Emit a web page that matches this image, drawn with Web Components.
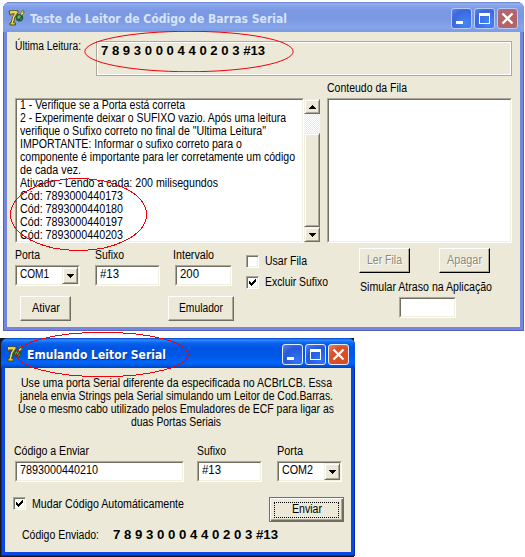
<!DOCTYPE html>
<html lang="pt-BR">
<head>
<meta charset="utf-8">
<title>Teste de Leitor de Código de Barras Serial</title>
<style>
html,body{margin:0;background:#fff;height:557px;overflow:hidden}
</style>
</head>
<body>
<demo-desktop></demo-desktop>
<script>
const define = (name, html, ready) => customElements.define(name, class extends HTMLElement {
  connectedCallback() {
    if (this.shadowRoot) return;
    const t = document.createElement('template');
    t.innerHTML = html;
    this.attachShadow({mode: 'open'}).append(document.importNode(t.content, true));
    if (ready) ready(this, this.shadowRoot);
  }
});

/* One line of text condensed or widened to the width in its w attribute. */
define('fit-text', `<style>
:host{display:block;height:13px;line-height:13px;font-size:12px;white-space:nowrap;flex:none}
span{display:inline-block;transform-origin:0 0}
</style><span><slot></slot></span>`, (el, root) => {
  const w = parseFloat(el.getAttribute('w'));
  const s = root.querySelector('span');
  el.style.width = w + 'px';
  s.style.transform = 'scaleX(' + w / s.getBoundingClientRect().width + ')';
});

define('win-edit', `<style>
:host{display:block;box-sizing:border-box;height:21px;background:#fff;border:1px solid;border-color:#aca899 #fff #fff #aca899;flex:none}
div{box-sizing:border-box;height:100%;border:1px solid;border-color:#716f64 #f1efe2 #f1efe2 #716f64;padding:1px 0 0 3px}
</style><div><slot></slot></div>`);

define('win-arrow', `<style>
:host{display:flex;box-sizing:border-box;width:16px;height:16px;align-items:center;justify-content:center;background:#ece9d8;border:1px solid;border-color:#f1efe2 #716f64 #716f64 #f1efe2;box-shadow:inset 1px 1px #fff,inset -1px -1px #aca899;flex:none}
:host([up]) svg{transform:scaleY(-1)}
</style><svg width="7" height="4" shape-rendering="crispEdges"><path d="M0 0h7v1h-1v1h-1v1h-1v1h-1v-1h-1v-1h-1v-1h-1z"/></svg>`);

define('win-combo', `<style>
:host{display:block;width:65px;flex:none}
div{display:flex;justify-content:space-between;margin:-1px 0 0}
::slotted(*){margin-top:1px}
win-arrow{height:17px}
</style><win-edit><div><slot></slot><win-arrow></win-arrow></div></win-edit>`);

define('win-button', `<style>
:host{display:flex;box-sizing:border-box;height:25px;align-items:center;justify-content:center;padding-bottom:1px;background:#ece9d8;border:1px solid;border-color:#fff #716f64 #716f64 #fff;box-shadow:inset -1px -1px #aca899;flex:none}
:host([disabled]){color:#8b897b;text-shadow:1px 1px #fff;border-right-color:#000;border-bottom-color:#000}
:host([default]){border-color:#716f64;box-shadow:inset 1px 1px #fff,inset -1px -1px #716f64,inset -2px -2px #aca899;padding:0}
:host([default]) div{border:1px dotted #000;width:63px;height:14px;display:flex;justify-content:center}
</style><div><slot></slot></div>`);

define('win-check', `<style>
:host{display:flex;gap:6px;height:13px;flex:none}
div{box-sizing:border-box;width:13px;height:13px;background:#fff;border:1px solid;border-color:#aca899 #fff #fff #aca899;box-shadow:inset 1px 1px #716f64,inset -1px -1px #f1efe2}
svg{display:none}
:host([checked]) svg{display:block}
</style><div><svg width="11" height="11" shape-rendering="crispEdges"><path d="M2 4h1v1h1v1h1v-1h1v-1h1v-1h1v-1h1v3h-1v1h-1v1h-1v1h-1v1h-1v-1h-1v-1h-1z"/></svg></div><slot></slot>`);

define('win-scroll', `<style>
:host{display:flex;flex-direction:column;box-sizing:border-box;width:16px;height:145px;padding:1px 0;flex:none}
i{height:19px;background:repeating-conic-gradient(#ece9d8 0 25%,#fff 0 50%) 0 0/2px 2px}
b{flex:1;background:#ece9d8;border:1px solid;border-color:#f1efe2 #716f64 #716f64 #f1efe2;box-shadow:inset 1px 1px #fff,inset -1px -1px #aca899}
win-arrow{height:15px}
</style><win-arrow up></win-arrow><i></i><b></b><win-arrow></win-arrow>`);

define('delphi-icon', `<style>:host{display:block;width:17px;height:17px;flex:none}svg{display:block}</style>
<svg width="17" height="17" viewBox="0 0 17 17">
<circle cx="11.5" cy="8.7" r="3.7" fill="#28543c"/>
<path d="M9 8l2-2 2 1-1 2-2 1zM12 10l2-1-1 2z" fill="#61b968"/>
<path d="M12.500 5l1.500-3.500 1.500-.5-.7 2.500 1.700-.8-1 2-2.500 1.800z" fill="#f7ee22" stroke="#3b4a18" stroke-width=".5"/>
<path d="M1 2l9-.3v2L7 8l-1.500 5.500L7.500 14v2H2v-2l1.500-.8L4.800 8 7 5H3.500L2 6.200z" fill="#e5c81b" stroke="#4d4311" stroke-width=".9"/>
<path d="M2 2.800h6.800M7.500 4.500L5.600 8l-1.300 5.500" fill="none" stroke="#fff485" stroke-width=".9"/>
</svg>`);

define('caption-button', `<style>
:host{display:block;box-sizing:border-box;width:21px;height:21px;border:1px solid #e4ecfc;border-radius:3px;background:radial-gradient(circle at 75% 80%,#3275f4,#2459dc 60%,#5b83e8);flex:none}
:host([inactive]){border-color:#b8caf4;background:radial-gradient(circle at 70% 75%,#4786f2,#3a68de 65%,#6187e6)}
:host([kind=close]){background:radial-gradient(circle at 70% 75%,#da4b1e,#d8502b 60%,#e98670)}
:host([kind=close][inactive]){background:radial-gradient(circle at 60% 65%,#b95f5c,#b2666f 65%,#a86f8d)}
svg{display:none}
:host([kind=min]) .min,:host([kind=max]) .max,:host([kind=close]) .close{display:block}
</style>
<svg class="min" width="19" height="19"><path d="M4 12h7v3H4z" fill="#fff"/></svg>
<svg class="max" width="19" height="19"><path d="M4 4h11v11H4zM5 7v7h9V7z" fill="#fff" fill-rule="evenodd"/></svg>
<svg class="close" width="19" height="19"><path d="M4.500 4.500l10 10M14.500 4.500l-10 10" stroke="#fff" stroke-width="2.300"/></svg>`);

define('xp-window', `<style>
:host{display:flex;flex-direction:column;box-sizing:border-box;border-radius:7px 7px 0 0;overflow:hidden;background:#0a48e4;box-shadow:inset 0 0 0 1px #0030b0;
 --bar:linear-gradient(#0842c4,#2c8cff 2px,#0a62ee 5px,#0054e2 10px,#0058e8 18px,#0265fa 25px,#0054d8 28px,#0040b8)}
:host([inactive]){background:#7587dc;box-shadow:inset 0 0 0 1px #5861bd;
 --bar:linear-gradient(#6a82d4,#97b2f0 2px,#84a1e9 4px,#7b98e3 9px,#7b98e2 17px,#85a5ea 25px,#7f9ce4 29px)}
header{display:flex;height:30px;background:var(--bar);color:#fff;text-shadow:1px 1px #0a2f87;font:bold 13px "DejaVu Sans Condensed","DejaVu Sans",sans-serif;box-sizing:border-box;flex:none}
:host([inactive]) header{color:#d8e4f8;text-shadow:none}
delphi-icon{margin:7px 3px 0 5px}
nav{display:flex;gap:2px;margin:6px 6px 0 auto}
main{flex:1;margin:0 4px 4px;background:#ece9d8;min-height:0}
</style>
<header><delphi-icon></delphi-icon><slot name="title"></slot><nav><caption-button kind="min"></caption-button><caption-button kind="max"></caption-button><caption-button kind="close"></caption-button></nav></header>
<main><slot></slot></main>`, (el, root) => {
  if (el.hasAttribute('inactive')) root.querySelectorAll('caption-button').forEach(b => b.setAttribute('inactive', ''));
});

define('red-oval', `<style>:host{position:absolute;display:block}svg{display:block;width:100%;height:100%}</style>
<svg preserveAspectRatio="none" viewBox="0 0 100 100" shape-rendering="crispEdges"><ellipse cx="50" cy="50" rx="49.600" ry="49.300" fill="none" stroke="#f00008" stroke-width="1" vector-effect="non-scaling-stroke"/></svg>`);

define('reader-form', `<style>
:host{display:block;padding:8px 8px 0}
div{box-sizing:border-box}
.row{display:flex}
.panel{margin:1px 0 0 15px;width:416px;height:35px;border:1px solid #aca899;box-shadow:inset 0 0 0 1px #fff;padding:3px 0 0 4px;font-weight:bold}
.lists{margin-top:5px}
.memo{width:289px;height:145px;margin-top:17px}
.memo fit-text:first-child{margin-top:-2px}
win-scroll{margin-top:17px}
.queue{margin-left:7px}
.queue win-edit{width:185px;height:145px;margin-top:4px}
.queue fit-text{position:relative;top:1px}
.left{width:231px;padding-top:6px}
.fields>div:nth-child(1){width:80px}.fields>div:nth-child(2){width:78px}
.fields win-edit{margin-top:3px}.fields win-combo{margin-top:3px}
.buttons{margin:10px 0 0 5px;justify-content:space-between;width:214px}
.checks{padding-top:12px;width:113px;display:flex;flex-direction:column;gap:8px}
.right{padding-top:5px;width:132px}
.right .row{justify-content:space-between;width:131px}
.right>fit-text{margin:8px 0 3px 1px}
</style>
<div class="row"><fit-text w="66">Última Leitura:</fit-text><div class="panel"><fit-text w="164">7 8 9 3 0 0 0 4 4 0 2 0 3 #13</fit-text></div></div>
<div class="row lists">
 <win-edit class="memo"><fit-text w="165">1 - Verifique se a Porta está correta</fit-text><fit-text w="266">2 - Experimente deixar o SUFIXO vazio. Após uma leitura</fit-text><fit-text w="246">verifique o Sufixo correto no final de "Ultima Leitura"</fit-text><fit-text w="222">IMPORTANTE: Informar o sufixo correto para o</fit-text><fit-text w="275">componente é importante para ler corretamente um código</fit-text><fit-text w="61">de cada vez.</fit-text><fit-text w="198">Ativado - Lendo a cada: 200 milisegundos</fit-text><fit-text w="103">Cód: 7893000440173</fit-text><fit-text w="103">Cód: 7893000440180</fit-text><fit-text w="103">Cód: 7893000440197</fit-text><fit-text w="103">Cód: 7893000440203</fit-text></win-edit>
 <win-scroll></win-scroll>
 <div class="queue"><fit-text w="80">Conteudo da Fila</fit-text><win-edit></win-edit></div>
</div>
<div class="row">
 <div class="left">
  <div class="row fields">
   <div><fit-text w="25">Porta</fit-text><win-combo><fit-text w="29">COM1</fit-text></win-combo></div>
   <div><fit-text w="29">Sufixo</fit-text><win-edit style="width:65px"><fit-text w="19">#13</fit-text></win-edit></div>
   <div><fit-text w="41">Intervalo</fit-text><win-edit style="width:57px;margin-left:2px"><fit-text w="19">200</fit-text></win-edit></div>
  </div>
  <div class="row buttons"><win-button style="width:51px"><fit-text w="28">Ativar</fit-text></win-button><win-button style="width:66px"><fit-text w="44">Emulador</fit-text></win-button></div>
 </div>
 <div class="checks"><win-check><fit-text w="42">Usar Fila</fit-text></win-check><win-check checked><fit-text w="63">Excluir Sufixo</fit-text></win-check></div>
 <div class="right">
  <div class="row"><win-button disabled style="width:51px"><fit-text w="35">Ler Fila</fit-text></win-button><win-button disabled style="width:51px"><fit-text w="35">Apagar</fit-text></win-button></div>
  <fit-text w="132">Simular Atraso na Aplicação</fit-text>
  <win-edit style="width:57px;margin-left:40px"></win-edit>
 </div>
</div>`);

define('emulator-form', `<style>
:host{display:block;padding:9px 7px 0 9px}
.row{display:flex}
.info{display:flex;flex-direction:column;align-items:center;width:324px}
.fields{margin-top:16px;margin-left:1px}
.fields>div:nth-child(1){width:182px}.fields>div:nth-child(2){width:80px}
.fields win-edit,.fields win-combo{margin-top:3px}
.fields fit-text.out{margin-left:-1px}
.send{margin-top:15px;justify-content:space-between;width:331px;margin-left:-1px}
.send>win-check>fit-text{margin-top:1px}
.sent{margin:7px 0 0 8px;gap:14px}
.sent fit-text+fit-text{font-weight:bold}
</style>
<div class="info"><fit-text w="311">Use uma porta Serial diferente da especificada no ACBrLCB. Essa</fit-text><fit-text w="313">janela envia Strings pela Serial simulando um Leitor de Cod.Barras.</fit-text><fit-text w="316">Use o mesmo cabo utilizado pelos Emuladores de ECF para ligar as</fit-text><fit-text w="90">duas Portas Seriais</fit-text></div>
<div class="row fields">
 <div><fit-text class="out" w="75">Código a Enviar</fit-text><win-edit style="width:169px"><fit-text w="78">7893000440210</fit-text></win-edit></div>
 <div><fit-text w="29">Sufixo</fit-text><win-edit style="width:65px"><fit-text w="19">#13</fit-text></win-edit></div>
 <div><fit-text w="26">Porta</fit-text><win-combo><fit-text w="31">COM2</fit-text></win-combo></div>
</div>
<div class="row send"><win-check checked><fit-text w="152">Mudar Código Automáticamente</fit-text></win-check><win-button default style="width:75px"><fit-text w="30">Enviar</fit-text></win-button></div>
<div class="row sent"><fit-text w="77">Código Enviado:</fit-text><fit-text w="165">7 8 9 3 0 0 0 4 4 0 2 0 3 #13</fit-text></div>`);

define('demo-desktop', `<style>
:host{display:block;position:relative;width:525px;height:557px;overflow:hidden;background:#fff;font-family:"Liberation Sans",Arial,sans-serif;font-size:12px;color:#000}
.a,.shade,red-oval{position:absolute}
.a{left:3px;top:2px;width:521px;height:329px}
.b{position:absolute;left:1px;top:338px;width:354px;height:218px}
.shade{left:0;top:338px;width:354px;height:219px;background:#18181c}
.a [slot]{margin:9px 0 0 2px;height:16px;line-height:16px;font-size:13px}
.b [slot]{margin:9px 0 0 1px;height:16px;line-height:16px;font-size:13px}
</style>
<xp-window class="a" inactive><fit-text slot="title" w="257">Teste de Leitor de Código de Barras Serial</fit-text><reader-form></reader-form></xp-window>
<div class="shade"></div>
<xp-window class="b"><fit-text slot="title" w="139">Emulando Leitor Serial</fit-text><emulator-form></emulator-form></xp-window>
<red-oval style="left:84px;top:31px;width:210px;height:41px"></red-oval>
<red-oval style="left:10px;top:178px;width:137px;height:73px"></red-oval>
<red-oval style="left:16px;top:332px;width:173px;height:45px"></red-oval>`);
</script>
</body>
</html>
